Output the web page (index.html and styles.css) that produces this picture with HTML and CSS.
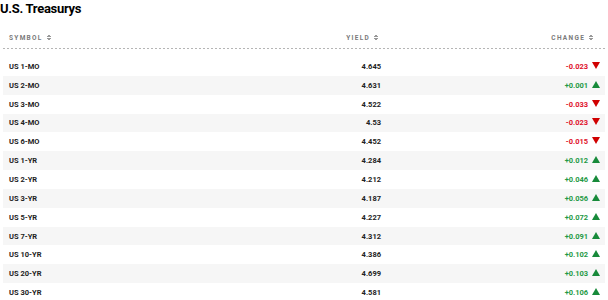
FILE: index.html
```html
<!DOCTYPE html>
<html lang="en">
<head>
    <meta charset="UTF-8">
    <title>U.S. Treasurys</title>
    <link rel="stylesheet" href="styles.css">
</head>
<body>
    <h2 class="title">U.S. Treasurys</h2>
    <div class="quotes">
        <div class="row head">
            <div class="sym">SYMBOL <span class="sort"></span></div>
            <div class="yield">YIELD <span class="sort"></span></div>
            <div class="chg">CHANGE <span class="sort"></span></div>
        </div>
        <div class="body">
            <div class="row"><div class="sym">US 1-MO</div><div class="yield">4.645</div><div class="chg down">-0.023 <span class="arrow"></span></div></div>
            <div class="row"><div class="sym">US 2-MO</div><div class="yield">4.631</div><div class="chg up">+0.001 <span class="arrow"></span></div></div>
            <div class="row"><div class="sym">US 3-MO</div><div class="yield">4.522</div><div class="chg down">-0.033 <span class="arrow"></span></div></div>
            <div class="row"><div class="sym">US 4-MO</div><div class="yield">4.53</div><div class="chg down">-0.023 <span class="arrow"></span></div></div>
            <div class="row"><div class="sym">US 6-MO</div><div class="yield">4.452</div><div class="chg down">-0.015 <span class="arrow"></span></div></div>
            <div class="row"><div class="sym">US 1-YR</div><div class="yield">4.284</div><div class="chg up">+0.012 <span class="arrow"></span></div></div>
            <div class="row"><div class="sym">US 2-YR</div><div class="yield">4.212</div><div class="chg up">+0.046 <span class="arrow"></span></div></div>
            <div class="row"><div class="sym">US 3-YR</div><div class="yield">4.187</div><div class="chg up">+0.056 <span class="arrow"></span></div></div>
            <div class="row"><div class="sym">US 5-YR</div><div class="yield">4.227</div><div class="chg up">+0.072 <span class="arrow"></span></div></div>
            <div class="row"><div class="sym">US 7-YR</div><div class="yield">4.312</div><div class="chg up">+0.091 <span class="arrow"></span></div></div>
            <div class="row"><div class="sym">US 10-YR</div><div class="yield">4.386</div><div class="chg up">+0.102 <span class="arrow"></span></div></div>
            <div class="row"><div class="sym">US 20-YR</div><div class="yield">4.699</div><div class="chg up">+0.103 <span class="arrow"></span></div></div>
            <div class="row"><div class="sym">US 30-YR</div><div class="yield">4.581</div><div class="chg up">+0.106 <span class="arrow"></span></div></div>
        </div>
    </div>
</body>
</html>
```

FILE: styles.css
```css
* {
    margin: 0;
    padding: 0;
    box-sizing: border-box;
}

body {
    font-family: "Roboto", "Liberation Sans", sans-serif;
    background-color: #fff;
    color: #222;
}

.title {
    height: 17px;
    padding-top: 2px;
    font-size: 13px;
    font-weight: 700;
    line-height: 14px;
    letter-spacing: -0.3px;
    color: #000;
}

.quotes {
    width: 602px;
    margin-left: 3px;
}

.row {
    display: grid;
    grid-template-columns: 300px 78px 1fr;
    align-items: center;
    height: 18.85px;
    font-size: 7.5px;
    font-weight: 700;
    line-height: 9px;
}

.sym {
    padding-left: 6px;
}

.yield,
.chg {
    text-align: right;
}

.chg {
    padding-right: 5px;
}

/* cabecalho */
.row.head {
    height: 32px;
    align-items: start;
    padding-top: 17px;
    font-size: 6.5px;
    line-height: 8px;
    letter-spacing: 1.3px;
    color: #7a7a7a;
    background-image: repeating-linear-gradient(to right, #b5b5b5 0 2px, transparent 2px 4px);
    background-size: 100% 1px;
    background-position: bottom;
    background-repeat: no-repeat;
}

.head .yield {
    padding-right: 3px;
}

.head .chg {
    padding-right: 12px;
}

.sort {
    display: inline-block;
    width: 4px;
    height: 7px;
    margin-left: 1px;
    vertical-align: -1px;
    background:
        linear-gradient(to bottom right, transparent 50%, #999 50%) top left / 2px 3px no-repeat,
        linear-gradient(to bottom left, transparent 50%, #999 50%) top right / 2px 3px no-repeat,
        linear-gradient(to top right, transparent 50%, #999 50%) bottom left / 2px 3px no-repeat,
        linear-gradient(to top left, transparent 50%, #999 50%) bottom right / 2px 3px no-repeat;
}

.body {
    padding-top: 8px;
}

.body .row:nth-child(even) {
    background-color: #f6f6f6;
}

.down { color: #e0102a; }
.up { color: #1f9a45; }

.arrow {
    display: inline-block;
    width: 0;
    height: 0;
    margin-left: 2px;
    border-left: 4px solid transparent;
    border-right: 4px solid transparent;
    vertical-align: 0;
}

.down .arrow {
    border-top: 7px solid #d00000;
}

.up .arrow {
    border-bottom: 7px solid #178a3a;
}
```
